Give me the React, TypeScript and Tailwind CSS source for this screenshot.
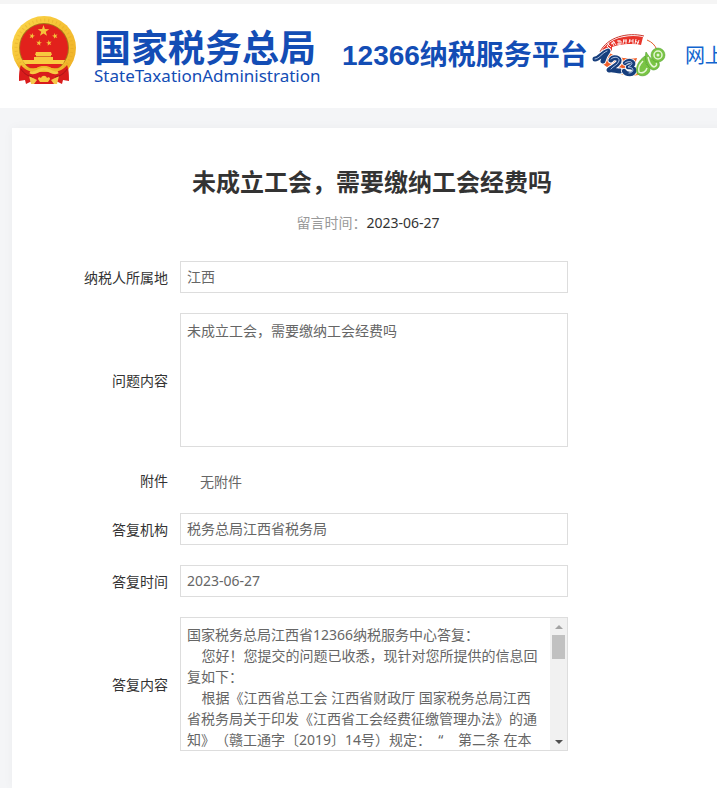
import React, { useRef } from 'react';

const star = (cx: number, cy: number, r: number, turn = 0) =>
  Array.from({ length: 10 }, (_, i) => {
    const radius = i % 2 === 0 ? r : r * 0.4;
    const angle = ((i * 36 - 90 + turn) * Math.PI) / 180;
    return `${(cx + radius * Math.cos(angle)).toFixed(2)},${(cy + radius * Math.sin(angle)).toFixed(2)}`;
  }).join(' ');

const Emblem = () => (
  <svg viewBox="0 0 64 68" className="w-16 h-[68px] shrink-0" aria-hidden="true">
    <defs>
      <linearGradient id="gold" x1="0" y1="0" x2="1" y2="1">
        <stop offset="0" stopColor="#fbd84c" />
        <stop offset="0.5" stopColor="#f5c033" />
        <stop offset="1" stopColor="#eeae25" />
      </linearGradient>
    </defs>
    <circle cx="32" cy="32" r="32" fill="url(#gold)" />
    <circle cx="32" cy="32" r="28" fill="none" stroke="#dda024" strokeWidth="3" strokeDasharray="1 3" opacity="0.4" />
    <circle cx="32" cy="32" r="25" fill="#a8761a" />
    <circle cx="32" cy="32" r="24" fill="#e2211c" />
    <polygon points={star(31.5, 15, 6)} fill="#f5c33b" />
    <polygon points={star(20, 20, 3, 15)} fill="#f5c33b" />
    <polygon points={star(43, 20, 3, -15)} fill="#f5c33b" />
    <polygon points={star(27, 27, 3, 10)} fill="#f5c33b" />
    <polygon points={star(37, 27, 3, -10)} fill="#f5c33b" />
    <path d="M24 36h15l1 3h-1v2h2v3H22v-3h2v-2h-1z" fill="#f7c93f" />
    <path d="M23 40.500h17" stroke="#c93018" strokeWidth="0.6" />
    <path d="M10 44h43l-2 4H13z" fill="#f9cd42" />
    <path d="M3 44c5 8 13 9 21 8 4-3 12-3 16 0 8 1 16 0 21-8l-7 14H10z" fill="#f0b62b" />
    <path d="M14 49h36c-3 3-7 3-10 3-5-3-11-3-16 0-3 0-7 0-10-3z" fill="#e2211c" />
    <path d="M9 49c-2 4-2 12-2 16l6-1 1 4 6-3 2 3h3l-2-12C17 56 12 53 9 49z" fill="#d91c1c" />
    <path d="M55 49c2 4 2 12 2 16l-6-1-1 4-6-3-2 3h-3l2-12c6 0 11-3 14-7z" fill="#d91c1c" />
    <path d="M23 56h18v12H23z" fill="#d91c1c" />
    <path d="M18 56c6 3 8-3 14-3s8 6 14 3" fill="none" stroke="#f7ca43" strokeWidth="3" />
    <path d="M17 60l8 4-3 4h-3zM47 60l-8 4 3 4h3z" fill="#f5c84a" />
    <path d="M26 63c0-2 2-2 3-1 1-3 5-3 6 0 1-1 3-1 3 1l-2 3h-8z" fill="#f7c93f" />
    <path d="M9 53c3 5 7 7 12 8M55 53c-3 5-7 7-12 8" fill="none" stroke="#a91418" strokeWidth="1" />
  </svg>
);

const HotlineMark = () => (
  <svg viewBox="0 0 74 44" className="w-[74px] h-11 shrink-0" aria-hidden="true">
    <path d="M9 18C16 4 36 0 51 3l-2 8C36 9 24 10 14 22z" fill="#e8342a" />
    <path d="M8 18C15 3 36-2 52 2" fill="none" stroke="#c9342a" strokeWidth="1" />
    <path d="M55 6c5 2 8 5 10 10" fill="none" stroke="#e35a27" strokeWidth="1" />
    <path d="M9 18l6-1c6 5 18 9 30 7l-3 10c-10 3-19 3-27-1-5-3-8-8-6-15z" fill="#f2602a" />
    <path d="M17 34c10 7 26 9 38 3" fill="none" stroke="#f08a35" strokeWidth="2" />
    <path d="M20 13c8-3 18-4 29-2l4 8c-11 3-23 2-33-1z" fill="#fff" />
    <path d="M15 12l3 3m-2-5l3 3m-2-4l-2 4M20 8l2 4m-3-2l4-2m-2-1l3 4M27 6v5m-2-4h4v3h-4M32 5l-1 5m3-5v5m-3-3h4M38 5l-1 4m4-4v5m-4-3h4M44 5l-1 5m4-4l-2 5m-2-4l4 2" fill="none" stroke="#fff" strokeWidth="0.9" />
    <g fill="none" strokeLinecap="round" strokeLinejoin="round">
      <path d="M3 25c4 0 7-6 13-8-3 4-4 6-5 10" stroke="#fff" strokeWidth="7" />
      <path d="M3 25c4 0 7-6 13-8-3 4-4 6-5 10" stroke="#173e7c" strokeWidth="5" />
      <path d="M3 25c4 0 7-6 12-8" stroke="#d4e4ff" strokeWidth="0.8" />
      <path d="M19 26c2-4 10-2 8 2-2 4-7 5-10 8 4-1 7 1 11 1" stroke="#fff" strokeWidth="7" />
      <path d="M19 26c2-4 10-2 8 2-2 4-7 5-10 8 4-1 7 1 11 1" stroke="#173e7c" strokeWidth="5" />
      <path d="M19 25c3-3 9-2 8 2-1 4-6 5-8 8" stroke="#d4e4ff" strokeWidth="0.8" />
      <path d="M33 29c4-4 11-1 7 3l-4 1c8-1 8 7 2 7-3 0-5-1-6-3" stroke="#fff" strokeWidth="6" />
      <path d="M33 29c4-4 11-1 7 3l-4 1c8-1 8 7 2 7-3 0-5-1-6-3" stroke="#173e7c" strokeWidth="4.500" />
      <path d="M33 29c4-3 9-1 6 2l-3 2c7 0 6 6 1 6" stroke="#d4e4ff" strokeWidth="0.8" />
    </g>
    <path d="M53 22c-6 4-10 11-8 17 3 5 12 3 13-3 0-4-2-6-4-6 1-3 1-6-1-8z" fill="#79c444" stroke="#4d9f2b" strokeWidth="0.6" />
    <path d="M51 27c-4 4-5 8-4 11 3 2 7 0 8-4" fill="none" stroke="#e4f6d4" strokeWidth="1.500" />
    <path d="M54 18c-2 7 1 16 7 18 6 0 8-6 5-9-2-2-4-2-5-1-3-2-5-5-7-8z" fill="#79c444" stroke="#4d9f2b" strokeWidth="0.6" />
    <path d="M56 23c1 5 3 9 6 10 3-1 3-3 2-4" fill="none" stroke="#e4f6d4" strokeWidth="1.500" />
    <circle cx="66" cy="21" r="7" fill="#79c444" stroke="#4d9f2b" strokeWidth="0.5" />
    <circle cx="66" cy="21" r="4" fill="none" stroke="#e4f6d4" strokeWidth="1.500" />
    <circle cx="66" cy="21" r="1.500" fill="#e4f6d4" />
  </svg>
);

const ANSWER = [
  '国家税务总局江西省12366纳税服务中心答复：',
  '    您好！您提交的问题已收悉，现针对您所提供的信息回复如下：',
  '    根据《江西省总工会 江西省财政厅 国家税务总局江西省税务局关于印发《江西省工会经费征缴管理办法》的通知》（赣工通字〔2019〕14号）规定：  “    第二条 在本',
].join('\n');

interface RowProps {
  id: string;
  label: string;
  children: React.ReactNode;
}

const Row = ({ id, label, children }: RowProps) => (
  <div className="flex items-center gap-3">
    <label htmlFor={id} className="w-[156px] shrink-0 pt-0.5 text-right text-[#333]">{label}</label>
    <div className="w-[388px] text-[#666]">{children}</div>
  </div>
);

const TextField = ({ id, value }: { id: string; value: string }) => (
  <input
    id={id}
    type="text"
    readOnly
    value={value}
    className="block w-full h-8 px-1.5 pb-0.5 border border-[#ddd] bg-white outline-none"
  />
);

const AnswerBox = ({ id }: { id: string }) => {
  const areaRef = useRef<HTMLTextAreaElement>(null);
  const scroll = (top: number) => areaRef.current?.scrollBy({ top });

  return (
    <div className="flex h-[134px] border border-[#ddd]">
      <textarea
        ref={areaRef}
        id={id}
        readOnly
        value={ANSWER}
        className="flex-1 min-w-0 h-full px-1.5 pt-1.5 leading-[21px] resize-none outline-none [scrollbar-width:none]"
      />
      <div className="flex flex-col items-center w-[17px] shrink-0 bg-[#f1f1f1]">
        <button type="button" aria-label="向上" onClick={() => scroll(-21)} className="flex items-center justify-center w-full h-[17px]">
          <svg viewBox="0 0 8 4" className="w-2 h-1"><path d="M0 4l4-4 4 4z" fill="#a3a3a3" /></svg>
        </button>
        <div className="flex-1 w-[13px]">
          <div className="h-6 bg-[#c1c1c1]" />
        </div>
        <button type="button" aria-label="向下" onClick={() => scroll(21)} className="flex items-center justify-center w-full h-[17px]">
          <svg viewBox="0 0 8 4" className="w-2 h-1"><path d="M0 0h8l-4 4z" fill="#505050" /></svg>
        </button>
      </div>
    </div>
  );
};

export default function App() {
  return (
    <div className="flex flex-col min-h-screen overflow-hidden bg-[#f4f5f7] text-sm font-['Noto_Sans','Noto_Sans_CJK_SC',sans-serif] [text-spacing-trim:space-all]">
      <header className="flex items-center h-[108px] pl-3 pb-3 border-t-4 border-[#f5f5f5] bg-white text-[#134db5] whitespace-nowrap">
        <Emblem />
        <div className="flex flex-col shrink-0 w-[228px] ml-[18px] pt-4">
          <span className="text-[37px] leading-9 font-bold font-['Noto_Sans_CJK_SC',sans-serif]">国家税务总局</span>
          <span className="text-[17px] leading-6">StateTaxationAdministration</span>
        </div>
        <span className="shrink-0 ml-5 pt-3 text-[28px] leading-9 font-bold font-['Liberation_Sans','Noto_Sans_CJK_SC',sans-serif]">12366纳税服务平台</span>
        <span className="shrink-0 ml-1 pt-3"><HotlineMark /></span>
        <a href="#" className="shrink-0 ml-[19px] pt-3 text-xl text-[#1265cf]">网上</a>
      </header>

      {/* Message detail */}
      <main className="flex-1 min-w-[720px] mt-5 ml-3 pt-9 pb-9 bg-white shadow-[0_0_10px_rgba(0,0,0,0.04)]">
        <h1 className="text-2xl leading-9 font-bold text-center text-[#333]">未成立工会，需要缴纳工会经费吗</h1>
        <p className="mt-3 pr-2 leading-[22px] text-center text-[#333]">
          <span className="text-[#999]">留言时间：</span>
          2023-06-27
        </p>

        <form className="flex flex-col gap-5 mt-[27px]">
          <Row id="region" label="纳税人所属地">
            <TextField id="region" value="江西" />
          </Row>
          <Row id="question" label="问题内容">
            <textarea
              id="question"
              readOnly
              value="未成立工会，需要缴纳工会经费吗"
              className="block w-full h-[134px] px-1.5 pt-1.5 leading-[21px] border border-[#ddd] resize-none outline-none"
            />
          </Row>
          <Row id="attachment" label="附件">
            <output id="attachment" className="block px-5 pt-1.5 pb-0.5 leading-[18px]">无附件</output>
          </Row>
          <Row id="agency" label="答复机构">
            <TextField id="agency" value="税务总局江西省税务局" />
          </Row>
          <Row id="reply-date" label="答复时间">
            <TextField id="reply-date" value="2023-06-27" />
          </Row>
          <Row id="answer" label="答复内容">
            <AnswerBox id="answer" />
          </Row>
        </form>
      </main>
    </div>
  );
}
